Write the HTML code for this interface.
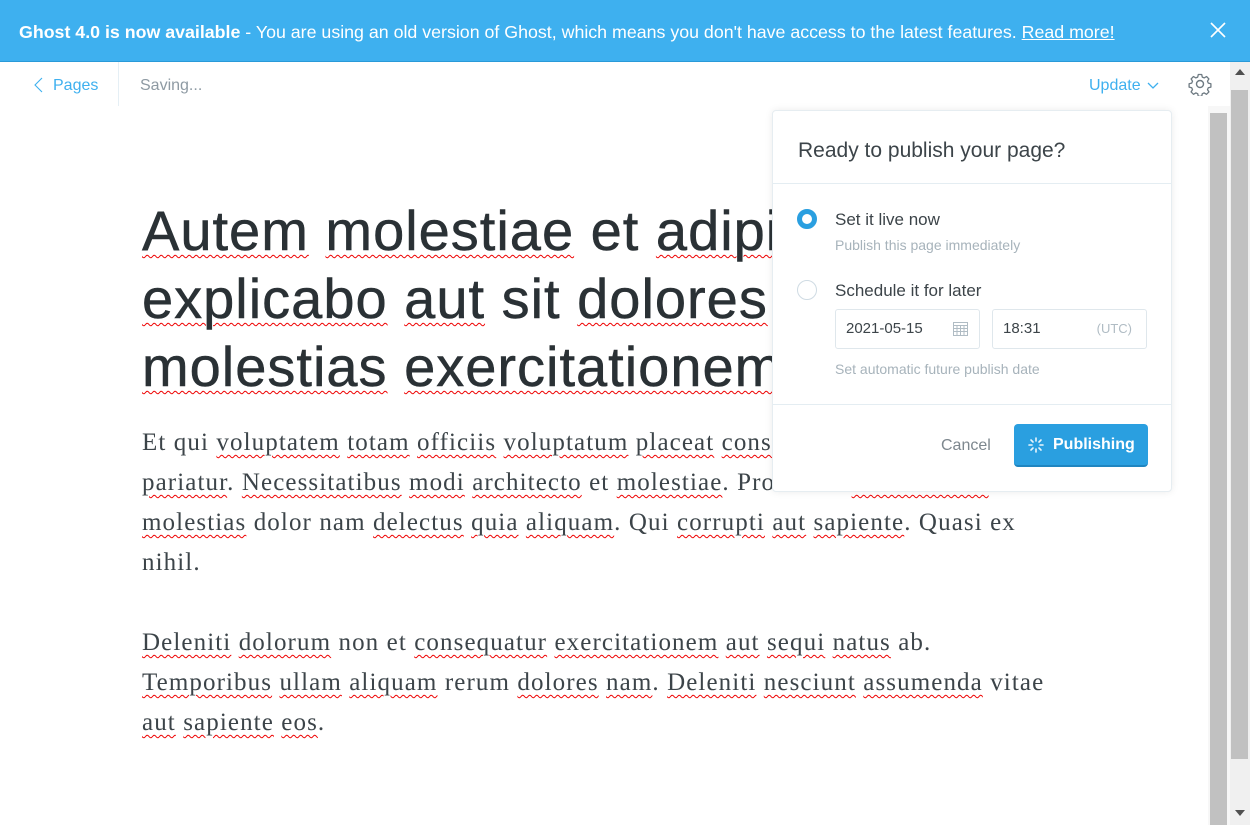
<!DOCTYPE html>
<html><head><meta charset="utf-8"><style>
*{margin:0;padding:0;box-sizing:border-box}
body{width:1250px;height:825px;overflow:hidden;background:#fff;font-family:"Liberation Sans",sans-serif;position:relative}
.banner{position:absolute;left:0;top:0;width:1250px;height:62px;background:#3eb0ef;border-bottom:1px solid #2a9ad8;color:#fff;font-size:17.8px;line-height:64px;padding-left:19px;white-space:nowrap}
.banner b{font-weight:700}
.banner u{text-decoration:underline}
.close{position:absolute;right:24px;top:22px;width:16px;height:16px}
.nav{position:absolute;top:62px;left:0;width:1230px;height:44px}
.pages{position:absolute;left:33px;top:15px;color:#3eb0ef;font-size:16px}
.sep{position:absolute;left:118px;top:0;width:1px;height:44px;background:#e5eff5}
.saving{position:absolute;left:140px;top:15px;color:#8e9aa3;font-size:16px}
.update{position:absolute;left:1089px;top:15px;color:#3eb0ef;font-size:16px}
.w{text-decoration:underline wavy #e00;text-decoration-thickness:1px;text-underline-offset:4px}
h1{position:absolute;left:142px;top:197px;font-size:56px;line-height:68px;font-weight:400;color:#2a3135;white-space:nowrap;letter-spacing:1px;-webkit-text-stroke:0.5px #2a3135}
.body{position:absolute;left:142px;top:423px;font-family:"Liberation Serif",serif;font-size:25px;line-height:40px;color:#3c4449;white-space:nowrap;letter-spacing:1.1px}
.sb1{position:absolute;left:1208px;top:106px;width:22px;height:719px;background:#f7f7f7}
.sb1 i{position:absolute;left:2px;top:7px;width:17px;height:712px;background:#c1c1c1}
.sb2{position:absolute;left:1230px;top:62px;width:20px;height:763px;background:#f0f0f0}
.sb2 i{position:absolute;left:1px;top:28px;width:17px;height:669px;background:#c1c1c1}
.pop{position:absolute;left:772px;top:110px;width:400px;height:382px;background:#fff;border:1px solid #e6edf1;border-radius:4px;box-shadow:0 0 8px rgba(0,0,0,.08)}
.pop h3{font-weight:400;font-size:21px;color:#3c4449;position:absolute;left:25px;top:28px}
.hr{position:absolute;left:0;width:398px;height:1px;background:#e4edf2}
.radio{position:absolute;left:24px;width:20px;height:20px;border-radius:50%}
.lbl{position:absolute;left:62px;font-size:17px;color:#3c4449;font-weight:500}
.sub{position:absolute;left:62px;font-size:14px;color:#a7b3bb}
.inp{position:absolute;top:198px;height:40px;border:1px solid #dfe7ec;border-radius:3px;font-size:15px;color:#3c4449;line-height:38px;padding-left:10px}
.btn{position:absolute;left:241px;top:313px;width:134px;height:43px;background:#2a9fe0;border-radius:4px;border-bottom:2px solid #1f85c0;color:#fff;font-weight:700;font-size:16px;line-height:42px;padding-left:39px}
</style></head><body>
<div class="banner"><b>Ghost 4.0 is now available</b> - You are using an old version of Ghost, which means you don't have access to the latest features. <u>Read more!</u>
<svg class="close" viewBox="0 0 16 16"><path d="M1 1L15 15M15 1L1 15" stroke="#fff" stroke-width="1.6"/></svg></div>
<div class="nav">
<svg style="position:absolute;left:33px;top:15px" width="10" height="16" viewBox="0 0 10 16"><path d="M9 1L2 8l7 7" fill="none" stroke="#3eb0ef" stroke-width="1.1"/></svg>
<span class="pages" style="left:53px">Pages</span>
<div class="sep"></div>
<span class="saving">Saving...</span>
<span class="update">Update</span>
<svg style="position:absolute;left:1147px;top:20px" width="12" height="8" viewBox="0 0 12 8"><path d="M1 1l5 5 5-5" fill="none" stroke="#3eb0ef" stroke-width="1.3"/></svg>
<svg style="position:absolute;left:1188px;top:10px" width="24" height="24" viewBox="0 0 24 24"><circle cx="12" cy="12" r="3.5" fill="none" stroke="#6e7a82" stroke-width="1.4"/><path d="M10.3 2.5h3.4l.6 2.6 1.9.8 2.3-1.4 2.4 2.4-1.4 2.3.8 1.9 2.6.6v3.4l-2.6.6-.8 1.9 1.4 2.3-2.4 2.4-2.3-1.4-1.9.8-.6 2.6h-3.4l-.6-2.6-1.9-.8-2.3 1.4-2.4-2.4 1.4-2.3-.8-1.9-2.6-.6v-3.4l2.6-.6.8-1.9-1.4-2.3 2.4-2.4 2.3 1.4 1.9-.8z" fill="none" stroke="#6e7a82" stroke-width="1.3" stroke-linejoin="round"/></svg>
</div>
<h1><span class="w">Autem</span> <span class="w">molestiae</span> et <span class="w">adipisci</span><br><span class="w">explicabo</span> <span class="w">aut</span> sit <span class="w">dolores</span><br><span class="w">molestias</span> <span class="w">exercitationem</span></h1>
<div class="body">Et qui <span class="w">voluptatem</span> <span class="w">totam</span> <span class="w">officiis</span> <span class="w">voluptatum</span> <span class="w">placeat</span> <span class="w">consequatur</span> et<br><span class="w">pariatur</span>. <span class="w">Necessitatibus</span> <span class="w">modi</span> <span class="w">architecto</span> et <span class="w">molestiae</span>. Provident <span class="w">accusantium</span><br><span class="w">molestias</span> dolor nam <span class="w">delectus</span> <span class="w">quia</span> <span class="w">aliquam</span>. Qui <span class="w">corrupti</span> <span class="w">aut</span> <span class="w">sapiente</span>. Quasi ex<br>nihil.<br><br><span class="w">Deleniti</span> <span class="w">dolorum</span> non et <span class="w">consequatur</span> <span class="w">exercitationem</span> <span class="w">aut</span> <span class="w">sequi</span> <span class="w">natus</span> ab.<br><span class="w">Temporibus</span> <span class="w">ullam</span> <span class="w">aliquam</span> rerum <span class="w">dolores</span> <span class="w">nam</span>. <span class="w">Deleniti</span> <span class="w">nesciunt</span> <span class="w">assumenda</span> vitae<br><span class="w">aut</span> <span class="w">sapiente</span> <span class="w">eos</span>.</div>
<div class="sb1"><i></i></div>
<div class="sb2"><i></i>
<svg style="position:absolute;left:5px;top:7px" width="10" height="6"><path d="M0 6L5 0L10 6z" fill="#505050"/></svg>
<svg style="position:absolute;left:5px;top:748px" width="10" height="6"><path d="M0 0L5 6L10 0z" fill="#505050"/></svg></div>
<div class="pop">
<h3>Ready to publish your page?</h3>
<div class="hr" style="top:72px"></div>
<div class="radio" style="top:98px;border:5px solid #2a9fe0;background:#fff"></div>
<div class="lbl" style="top:99px">Set it live now</div>
<div class="sub" style="top:126px">Publish this page immediately</div>
<div class="radio" style="top:169px;border:1px solid #cfdbe3"></div>
<div class="lbl" style="top:170px">Schedule it for later</div>
<div class="inp" style="left:62px;width:145px">2021-05-15
<svg style="position:absolute;right:11px;top:11px" width="15" height="15" viewBox="0 0 15 15"><rect x="0.5" y="1.5" width="14" height="13" fill="none" stroke="#b0bcc4"/><path d="M0.5 4.5h14M0.5 7.5h14M0.5 10.5h14M4 4.5v10M7.5 4.5v10M11 4.5v10" stroke="#b0bcc4"/></svg></div>
<div class="inp" style="left:219px;width:155px">18:31<span style="position:absolute;right:14px;color:#b0bcc4;font-size:13px">(UTC)</span></div>
<div class="sub" style="top:250px">Set automatic future publish date</div>
<div class="hr" style="top:293px"></div>
<div style="position:absolute;left:168px;top:326px;color:#7d878e;font-size:16px">Cancel</div>
<div class="btn"><svg style="position:absolute;left:14px;top:13px" width="16" height="16" viewBox="0 0 16 16"><g stroke="#fff" stroke-width="1.6" stroke-linecap="round"><path d="M8 1v3M8 12v3M1 8h3M12 8h3M3 3l2 2M11 11l2 2M13 3l-2 2M3 13l2-2" opacity=".9"/></g></svg>Publishing</div>
</div>
</body></html>
